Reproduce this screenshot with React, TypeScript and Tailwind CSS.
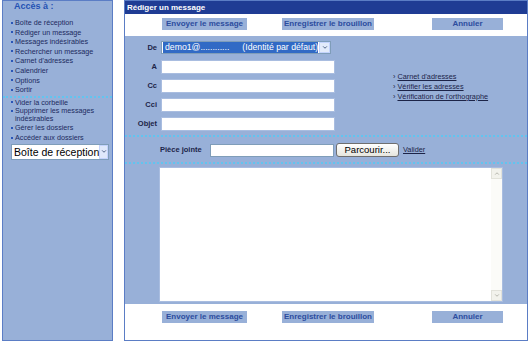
import React from 'react'

const menuTop = [
  'Boîte de réception',
  'Rédiger un message',
  'Messages indésirables',
  'Rechercher un message',
  "Carnet d'adresses",
  'Calendrier',
  'Options',
  'Sortir',
]

const Chevron = ({ up = false, className = '' }: { up?: boolean; className?: string }) => (
  <svg viewBox="0 0 8 6" className={className}>
    <polyline
      points={up ? '1.5,4.5 4,2 6.5,4.5' : '1.5,1.5 4,4 6.5,1.5'}
      fill="none"
      stroke="currentColor"
      strokeWidth="1.3"
    />
  </svg>
)

function Bullet() {
  return <span className="inline-block w-[2px] h-[2px] bg-[#2a56b8] mr-[2px] mb-[1px] align-middle" />
}

function ActionButtons() {
  return (
    <div className="flex text-[8px] font-bold text-[#2c4c9e] leading-[12px]">
      <div className="ml-[37px] w-[85px] h-[12px] bg-[#98b0d8] text-center">Envoyer le message</div>
      <div className="ml-[35px] w-[92px] h-[12px] bg-[#98b0d8] text-center">Enregistrer le brouillon</div>
      <div className="ml-[58px] w-[71px] h-[12px] bg-[#98b0d8] text-center">Annuler</div>
    </div>
  )
}

function Field({ label, mt }: { label: string; mt: string }) {
  return (
    <div className={`flex items-center ${mt}`}>
      <div className="w-[32px] text-right text-[7.5px] font-bold text-[#1c2448]">{label}</div>
      <div className="ml-[4px] w-[174px] h-[14px] bg-white border border-[#a9bde0]" />
    </div>
  )
}

export default function App() {
  return (
    <div className="w-[530px] h-[343px] bg-white flex font-['Liberation_Sans',Arial,sans-serif]">
      {/* Sidebar */}
      <aside className="ml-[2px] w-[111px] h-[341px] border border-[#5b7dc5] bg-[#98b0d8] flex flex-col">
        <div className="pl-[11px] h-[17px] leading-[11px] text-[9px] font-bold text-[#2452b4]">Accès à :</div>
        <ul className="pl-[8px] text-[7.2px] text-[#1c2a5e] leading-[9.6px]">
          {menuTop.map((m) => (
            <li key={m} className="whitespace-nowrap">
              <Bullet />
              {m}
            </li>
          ))}
        </ul>
        <div className="mt-[1px] border-t-2 border-dotted border-[#62c4ef]" />
        <ul className="pl-[8px] text-[7.2px] text-[#1c2a5e] leading-[9.6px]">
          <li>
            <Bullet />
            Vider la corbeille
          </li>
          <li className="leading-[8px]">
            <Bullet />
            Supprimer les messages
            <br />
            <span className="pl-[4px]">indésirables</span>
          </li>
          <li>
            <Bullet />
            Gérer les dossiers
          </li>
          <li>
            <Bullet />
            Accéder aux dossiers
          </li>
        </ul>
        <div className="ml-[8px] mt-[1px] w-[98px] h-[16px] bg-white border border-[#7f9db9] flex items-center">
          <span className="flex-1 min-w-0 pl-[2px] text-[10.5px] leading-[14px] text-black whitespace-nowrap overflow-hidden">
            Boîte de réception
          </span>
          <span className="shrink-0 w-[9px] h-[14px] border border-[#c3d3fd] bg-[#dfe8fb] flex items-center justify-center text-[#4d6185]">
            <Chevron className="w-[6px] h-[5px]" />
          </span>
        </div>
      </aside>

      {/* Main */}
      <main className="ml-[11px] w-[404px] h-[341px] border border-[#5b7dc5] flex flex-col">
        <div className="h-[13px] bg-[#1f3c94] text-white font-bold text-[8px] leading-[13px] pl-[2px]">Rédiger un message</div>
        <div className="h-[22px] pt-[4px] bg-white">
          <ActionButtons />
        </div>

        <div className="h-[268px] bg-[#98b0d8] flex flex-col">
          <div className="flex">
            <div className="flex flex-col pt-[5px]">
              <div className="flex items-center">
                <div className="w-[32px] text-right text-[7.5px] font-bold text-[#1c2448]">De</div>
                <div className="ml-[4px] w-[170px] h-[13px] bg-white border border-[#7f9db9] flex items-center">
                  <span className="ml-[1px] w-[155px] h-[11px] bg-[#316ac5] text-white text-[8.7px] leading-[11px] pl-[2px] whitespace-nowrap overflow-hidden">
                    demo1@............<span className="ml-[13px]">(Identité par défaut)</span>
                  </span>
                  <span className="ml-auto w-[11px] h-[11px] border border-[#c3d3fd] bg-[#e3ebfb] flex items-center justify-center text-[#4d6185]">
                    <Chevron className="w-[6px] h-[5px]" />
                  </span>
                </div>
              </div>
              <Field label="A" mt="mt-[6px]" />
              <Field label="Cc" mt="mt-[5px]" />
              <Field label="Cci" mt="mt-[5px]" />
              <Field label="Objet" mt="mt-[5px]" />
            </div>
            <div className="ml-[58px] pt-[36px] text-[7.3px] leading-[10px] text-[#1c2448]">
              <div>› <span className="underline">Carnet d'adresses</span></div>
              <div>› <span className="underline">Vérifier les adresses</span></div>
              <div>› <span className="underline">Vérification de l'orthographe</span></div>
            </div>
          </div>

          <div className="mt-[4px] border-t-2 border-dotted border-[#62c4ef]" />

          <div className="mt-[6px] flex items-center h-[14px]">
            <div className="ml-[35px] w-[50px] text-[7.5px] font-bold text-[#1c2448]">Pièce jointe</div>
            <div className="w-[124px] h-[13px] bg-white border border-[#7f9db9]" />
            <div className="ml-[2px] w-[63px] h-[14px] rounded-[3px] border border-[#6f6f6f] bg-gradient-to-b from-white to-[#e6e6de] text-[9.5px] leading-[12px] text-center text-black">
              Parcourir...
            </div>
            <div className="ml-[4px] text-[7.3px] underline text-[#1c2448]">Valider</div>
          </div>

          <div className="mt-[5px] border-t-2 border-dotted border-[#62c4ef]" />

          <div className="mt-[3px] ml-[34px] w-[344px] h-[135px] bg-white border border-[#a9bde0] flex justify-end">
            <div className="w-[11px] h-full bg-[#fbfbf8] flex flex-col justify-between">
              <div className="h-[11px] border border-[#e2e2da] bg-[#f2f2ec] flex items-center justify-center text-[#b4b4ac]">
                <Chevron up className="w-[6px] h-[5px]" />
              </div>
              <div className="h-[11px] border border-[#e2e2da] bg-[#f2f2ec] flex items-center justify-center text-[#b4b4ac]">
                <Chevron className="w-[6px] h-[5px]" />
              </div>
            </div>
          </div>
        </div>

        <div className="flex-1 pt-[7px] bg-white">
          <ActionButtons />
        </div>
      </main>
    </div>
  )
}
